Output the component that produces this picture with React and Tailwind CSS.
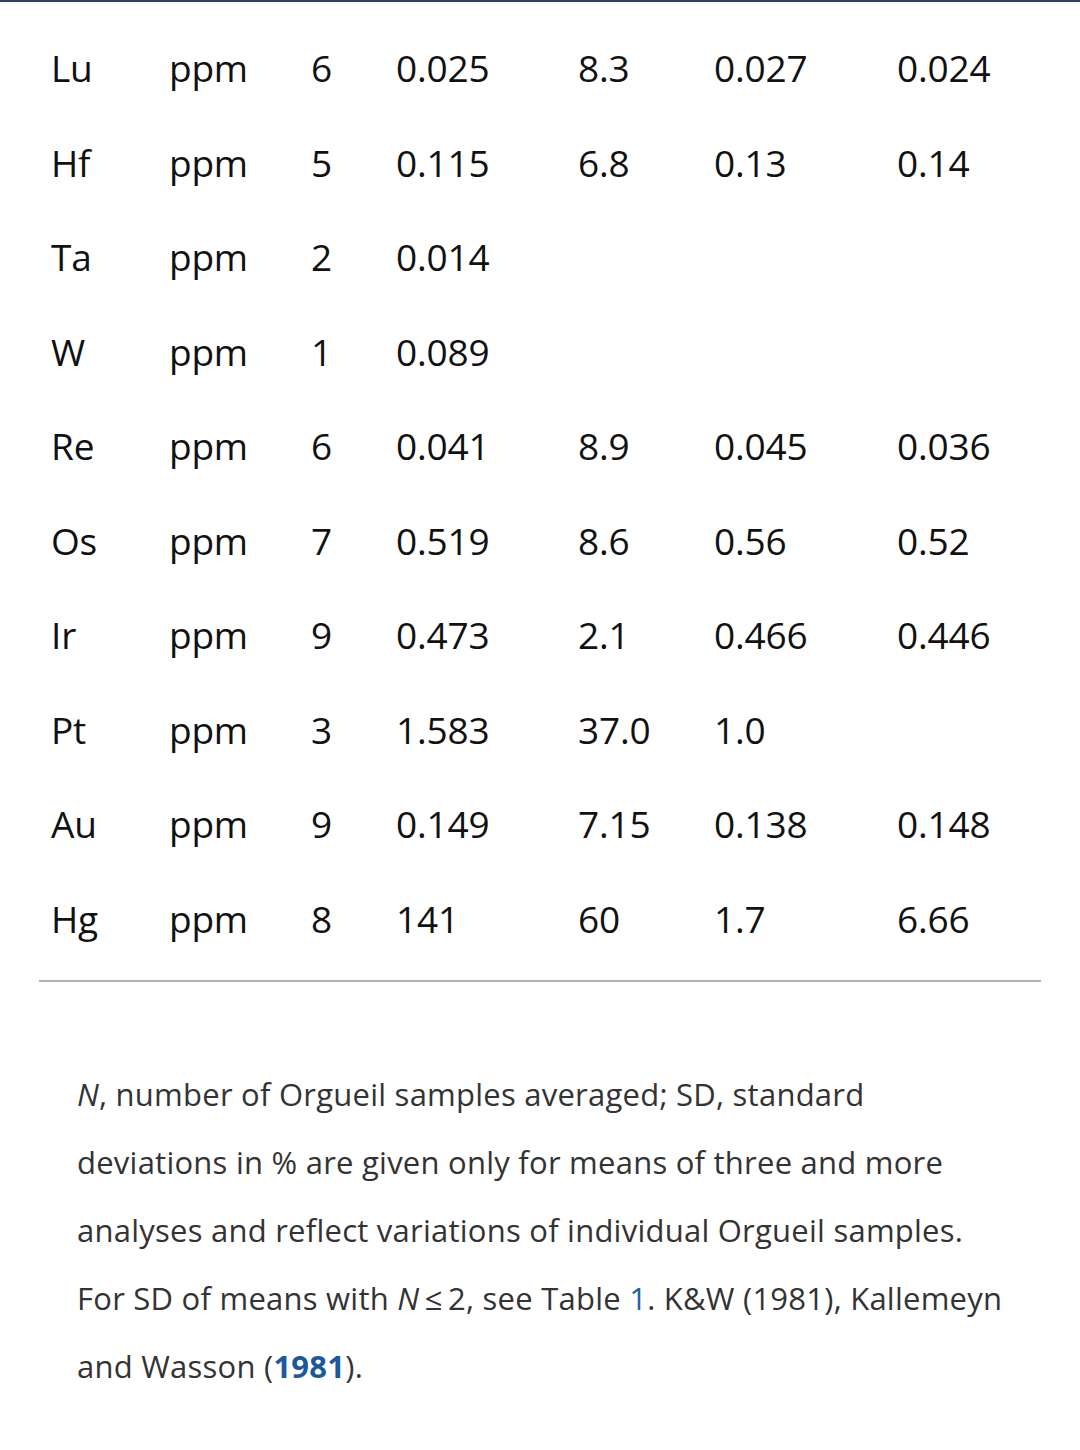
import React from 'react';

const rows = [
    ['Lu', 'ppm', '6', '0.025', '8.3', '0.027', '0.024'],
    ['Hf', 'ppm', '5', '0.115', '6.8', '0.13', '0.14'],
    ['Ta', 'ppm', '2', '0.014', '', '', ''],
    ['W', 'ppm', '1', '0.089', '', '', ''],
    ['Re', 'ppm', '6', '0.041', '8.9', '0.045', '0.036'],
    ['Os', 'ppm', '7', '0.519', '8.6', '0.56', '0.52'],
    ['Ir', 'ppm', '9', '0.473', '2.1', '0.466', '0.446'],
    ['Pt', 'ppm', '3', '1.583', '37.0', '1.0', ''],
    ['Au', 'ppm', '9', '0.149', '7.15', '0.138', '0.148'],
    ['Hg', 'ppm', '8', '141', '60', '1.7', '6.66'],
];

const App = () => {
    return (
        <div className="min-h-[1450px] bg-white" style={{ fontFamily: '"Open Sans", "Noto Sans", sans-serif' }}>
            {/* dark rule left over from the header above */}
            <div className="h-[2px] bg-[#2a4466]" />

            {/* Table body */}
            <div className="mx-[39px] pt-[19px] pb-[14px] border-b-2 border-[#b0b0b0]">
                {rows.map((row) => (
                    <div
                        key={row[0]}
                        className="grid grid-cols-[130px_142px_85px_182px_136px_183px_1fr] h-[94.5px] items-center text-[37px] tracking-[-0.2px] leading-[94.5px] text-[#111]"
                    >
                        {row.map((cell, i) => (
                            <div key={i} className={i === 0 ? 'pl-[12px]' : ''}>
                                {cell}
                            </div>
                        ))}
                    </div>
                ))}
            </div>

            {/* Footnote */}
            <div className="pl-[77px] pr-[60px] pt-[78px] text-[31px] tracking-[0.24px] leading-[68px] text-[#333]">
                <i>N</i>, number of Orgueil samples averaged; SD, standard
                <br />
                deviations in % are given only for means of three and more
                <br />
                analyses and reflect variations of individual Orgueil samples.
                <br />
                For SD of means with <i>N</i>{'\u2009'}≤{'\u2009'}2, see Table <span className="text-[#1b63a8]">1</span>.
                K&amp;W (1981), Kallemeyn
                <br />
                and Wasson (<span className="font-bold text-[#1b5a9a]">1981</span>).
            </div>
        </div>
    );
};

export default App;
